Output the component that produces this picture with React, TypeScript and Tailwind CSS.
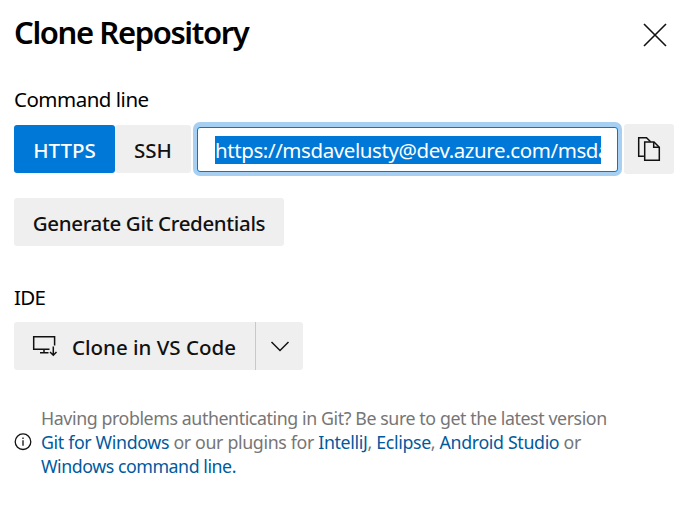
import React from 'react';

const link = 'text-[#005a9e]';

function CopyIcon() {
  return (
    <svg width="24" height="26" viewBox="0 0 24 26" fill="none" stroke="#111" strokeWidth="1.5">
      <path d="M6.9 20.2H1.7V1.7H9.5L13.6 5.8" />
      <path d="M7.7 5.9H17L22.3 11.2V24.2H7.7Z" />
      <path d="M16.7 5.9V11.3H22.1" />
    </svg>
  );
}

function CloneIcon() {
  return (
    <svg width="26" height="22" viewBox="0 0 26 22" fill="none" stroke="#111" strokeWidth="1.5">
      <path d="M17.5 14.3H1.7V1.7H22.6V10.5" />
      <path d="M12 14.3V17.8M8 17.8H16.5" />
      <path d="M21.3 11.5V20M18 17L21.3 20.3L24.5 17" />
    </svg>
  );
}

export default function App() {
  return (
    <main className="h-[505px] w-[700px] overflow-hidden bg-white pl-[14px] pr-[26px] font-['Noto_Sans',sans-serif] text-[20.5px] text-black">
      <header className="flex h-[82px] justify-between">
        <h1 className="pt-[11px] text-[31px] font-semibold leading-[42px] tracking-[-1.38px] whitespace-nowrap">Clone Repository</h1>
        <button aria-label="Close" className="mt-[22px] mr-[6px] h-[26px] w-[26px]">
          <svg width="26" height="26" viewBox="0 0 26 26" stroke="#111" strokeWidth="1.6">
            <path d="M2 2L24 24M24 2L2 24" />
          </svg>
        </button>
      </header>
      <div className="h-[40px] leading-[35px] tracking-[-0.5px]">Command line</div>
      <div className="flex h-[54px] items-center">
        <button className="h-[48px] w-[101px] rounded-[3px] bg-[#0078d7] pt-[2px] font-medium text-white">HTTPS</button>
        <button className="h-[48px] w-[76px] rounded-[3px] bg-[#efefef] pt-[2px] font-medium text-[#111]">SSH</button>
        <div className="ml-[2px] h-[54px] w-[429px] rounded-[7px] bg-[#a6cff2] py-[5px] px-[4px]">
          <div className="flex h-[45px] items-center rounded-[3px] border border-[#0078d7] bg-white pl-[17px]">
            <div className="h-[28px] w-[386px] overflow-hidden whitespace-nowrap bg-[#0078d7] leading-[28px] tracking-[-0.41px] text-white">https://msdavelusty@dev.azure.com/msda</div>
          </div>
        </div>
        <button aria-label="Copy" className="ml-[2px] flex h-[50px] w-[50px] items-center justify-center rounded-[3px] bg-[#efefef]">
          <CopyIcon />
        </button>
      </div>
      <button className="mt-[22px] block h-[48px] w-[270px] rounded-[3px] bg-[#efefef] pt-[3px] font-medium tracking-[-0.35px] text-[#111] whitespace-nowrap">Generate Git Credentials</button>
      <div className="mt-[34px] h-[42px] leading-[35px] tracking-[-0.7px]">IDE</div>
      <div className="flex h-[48px] w-[289px] rounded-[3px] bg-[#efefef] text-[#111]">
        <button className="flex w-[242px] items-center border-r border-[#c8c8c8] pl-[18px]">
          <CloneIcon />
          <span className="ml-[14px] pt-[3px] font-medium whitespace-nowrap">Clone in VS Code</span>
        </button>
        <button aria-label="More options" className="flex flex-1 items-center justify-center">
          <svg width="20" height="12" viewBox="0 0 20 12" fill="none" stroke="#111" strokeWidth="1.5">
            <path d="M1.5 2L10 10.5L18.5 2" />
          </svg>
        </button>
      </div>
      <div className="mt-[36px] flex items-center">
        <svg width="18" height="18" viewBox="0 0 18 18" fill="none" stroke="#111" strokeWidth="1.3">
          <circle cx="9" cy="8.7" r="7.8" />
          <path d="M9 7.3V12.7M9 4.5V5.9" />
        </svg>
        <p className="ml-[9px] text-[17.8px] leading-[24px] text-[#767676]">
          <span className="block tracking-[-0.41px] whitespace-nowrap">Having problems authenticating in Git? Be sure to get the latest version</span>
          <span className="block tracking-[-0.35px] whitespace-nowrap"><a className={link}>Git for Windows</a> or our plugins for <a className={link}>IntelliJ</a>, <a className={link}>Eclipse</a>, <a className={link}>Android Studio</a> or</span>
          <span className="block tracking-[-0.46px] whitespace-nowrap"><a className={link}>Windows command line.</a></span>
        </p>
      </div>
    </main>
  );
}
